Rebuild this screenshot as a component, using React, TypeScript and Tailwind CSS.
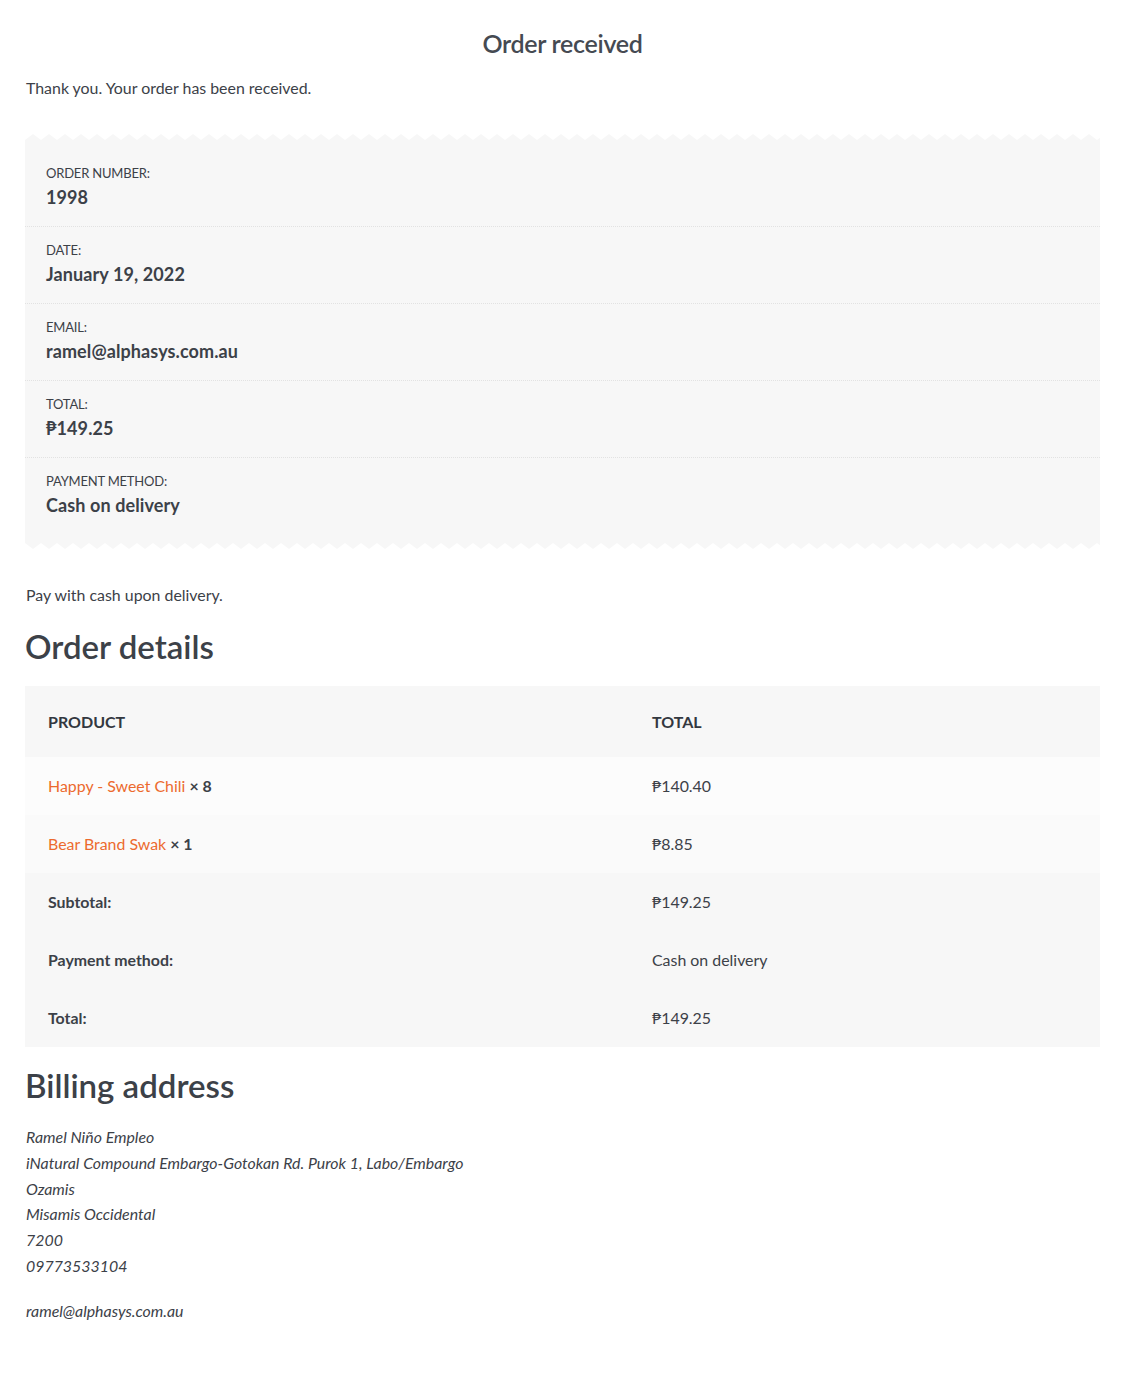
import React from "react";

function Zigzag({ flip }: { flip?: boolean }) {
  const id = flip ? "zzb" : "zzt";
  return (
    <svg className="block w-full h-[8px]" preserveAspectRatio="none">
      <defs>
        <pattern id={id} width="16" height="8" patternUnits="userSpaceOnUse">
          {flip ? (
            <polygon points="0,0 16,0 16,1 8,7 0,1" fill="#f7f7f7" />
          ) : (
            <polygon points="0,8 0,7 8,1 16,7 16,8" fill="#f7f7f7" />
          )}
        </pattern>
      </defs>
      <rect width="100%" height="8" fill={`url(#${id})`} />
    </svg>
  );
}

const overview = [
  ["ORDER NUMBER:", "1998"],
  ["DATE:", "January 19, 2022"],
  ["EMAIL:", "ramel@alphasys.com.au"],
  ["TOTAL:", "₱149.25"],
  ["PAYMENT METHOD:", "Cash on delivery"],
];

export default function App() {
  return (
    <div className="bg-white min-h-[1374px] text-[#3c4148] font-['Lato','Noto_Sans',sans-serif] text-[15.9px]">
      <div className="px-[25px] pt-[27px] w-[1125px]">
        <h1 className="text-center text-[25px] leading-[32px] font-semibold text-[#454a52] tracking-[-0.3px]">
          Order received
        </h1>
        <p className="mt-[17px] leading-[24px] pl-px">Thank you. Your order has been received.</p>

        <div className="mt-[33px]">
          <Zigzag />
          <div className="bg-[#f7f7f7] pt-[9px] pb-[8px]">
            {overview.map(([l, v], i) => (
              <div
                key={l}
                className={`px-[21px] pt-[15px] pb-[17px] ${i < overview.length - 1 ? "border-b border-dotted border-[#e2e2e2]" : ""}`}
              >
                <div className="text-[13px] leading-[16px] text-[#3c4148] tracking-[-0.2px]">{l}</div>
                <div className="mt-[4px] text-[18px] leading-[24px] font-bold text-[#3c4148] tracking-[0.1px]">{v}</div>
              </div>
            ))}
          </div>
          <Zigzag flip />
        </div>

        <p className="mt-[33px] leading-[24px] pl-px">Pay with cash upon delivery.</p>

        <h2 className="mt-[19px] text-[33px] leading-[40px] font-semibold text-[#3c4148]">Order details</h2>

        <table className="mt-[20px] w-full border-collapse text-left">
          <thead>
            <tr className="bg-[#f7f7f7]">
              <th className="w-[604px] px-[23px] h-[71px] font-bold text-[16px] text-[#333840]">PRODUCT</th>
              <th className="px-[23px] h-[71px] font-bold text-[16px] text-[#333840]">TOTAL</th>
            </tr>
          </thead>
          <tbody>
            <tr className="bg-[#fcfcfc]">
              <td className="px-[23px] h-[58px]">
                <span className="text-[#ec6a2e]">Happy - Sweet Chili</span>{" "}
                <strong className="font-bold">× 8</strong>
              </td>
              <td className="px-[23px] h-[58px]">₱140.40</td>
            </tr>
            <tr className="bg-[#fafafa]">
              <td className="px-[23px] h-[58px]">
                <span className="text-[#ec6a2e]">Bear Brand Swak</span>{" "}
                <strong className="font-bold">× 1</strong>
              </td>
              <td className="px-[23px] h-[58px]">₱8.85</td>
            </tr>
          </tbody>
          <tfoot className="bg-[#f7f7f7]">
            <tr>
              <th className="px-[23px] h-[58px] font-bold">Subtotal:</th>
              <td className="px-[23px] h-[58px]">₱149.25</td>
            </tr>
            <tr>
              <th className="px-[23px] h-[58px] font-bold">Payment method:</th>
              <td className="px-[23px] h-[58px]">Cash on delivery</td>
            </tr>
            <tr>
              <th className="px-[23px] h-[58px] font-bold">Total:</th>
              <td className="px-[23px] h-[58px]">₱149.25</td>
            </tr>
          </tfoot>
        </table>

        <h2 className="mt-[18px] text-[33px] leading-[40px] font-semibold text-[#3c4148]">Billing address</h2>

        <address className="mt-[19px] italic leading-[25.8px] pl-px">
          Ramel Niño Empleo
          <br />
          iNatural Compound Embargo-Gotokan Rd. Purok 1, Labo/Embargo
          <br />
          Ozamis
          <br />
          Misamis Occidental
          <br />
          7200
          <br />
          <p>09773533104</p>
          <p className="mt-[19px]">ramel@alphasys.com.au</p>
        </address>
      </div>
    </div>
  );
}
